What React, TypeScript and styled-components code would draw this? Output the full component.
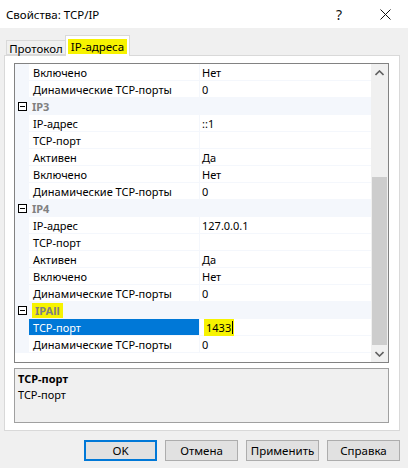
import React from 'react';
import styled, { createGlobalStyle } from 'styled-components';

const GlobalStyle = createGlobalStyle`
  html, body {
    margin: 0;
    padding: 0;
    background: #f0f0f0;
  }
  body {
    font-family: 'Segoe UI', 'Noto Sans', 'Liberation Sans', sans-serif;
    font-size: 11px;
    color: #000;
  }
`;

type Row =
  | { kind: 'category'; label: string; mark?: boolean }
  | { kind: 'prop'; name: string; value: string; selected?: boolean; mark?: boolean };

const rows: Row[] = [
  { kind: 'prop', name: 'Включено', value: 'Нет' },
  { kind: 'prop', name: 'Динамические TCP-порты', value: '0' },
  { kind: 'category', label: 'IP3' },
  { kind: 'prop', name: 'IP-адрес', value: '::1' },
  { kind: 'prop', name: 'TCP-порт', value: '' },
  { kind: 'prop', name: 'Активен', value: 'Да' },
  { kind: 'prop', name: 'Включено', value: 'Нет' },
  { kind: 'prop', name: 'Динамические TCP-порты', value: '0' },
  { kind: 'category', label: 'IP4' },
  { kind: 'prop', name: 'IP-адрес', value: '127.0.0.1' },
  { kind: 'prop', name: 'TCP-порт', value: '' },
  { kind: 'prop', name: 'Активен', value: 'Да' },
  { kind: 'prop', name: 'Включено', value: 'Нет' },
  { kind: 'prop', name: 'Динамические TCP-порты', value: '0' },
  { kind: 'category', label: 'IPAll', mark: true },
  { kind: 'prop', name: 'TCP-порт', value: '1433', selected: true, mark: true },
  { kind: 'prop', name: 'Динамические TCP-порты', value: '0' },
];

const Window = styled.div`
  width: 408px;
  height: 468px;
  display: flex;
  flex-direction: column;
  background: #f0f0f0;
  overflow: hidden;
`;

const TitleBar = styled.div`
  height: 28px;
  background: #fff;
  display: flex;
  align-items: center;
  padding-left: 6px;
  flex-shrink: 0;
`;

const Title = styled.div`
  flex: 1;
  font-size: 11.5px;
  color: #000;
`;

const TitleButton = styled.div`
  width: 46px;
  height: 28px;
  display: flex;
  align-items: center;
  justify-content: center;
  font-size: 14px;
  color: #111;
`;

const Body = styled.div`
  display: flex;
  flex-direction: column;
  padding: 7px 8px 0 4px;
`;

const TabStrip = styled.div`
  display: flex;
  align-items: flex-end;
  height: 20px;
  padding-left: 2px;
  position: relative;
  z-index: 1;
`;

const Tab = styled.div<{ $active?: boolean }>`
  box-sizing: border-box;
  display: flex;
  align-items: center;
  justify-content: center;
  border: 1px solid #d9d9d9;
  border-bottom: ${p => (p.$active ? 'none' : '1px solid #d9d9d9')};
  background: ${p => (p.$active ? '#fff' : '#f0f0f0')};
  height: ${p => (p.$active ? '21px' : '15px')};
  margin-bottom: ${p => (p.$active ? '-1px' : '0')};
  width: ${p => (p.$active ? '65px' : '60px')};
  margin-left: ${p => (p.$active ? '-1px' : '0')};
  padding-top: ${p => (p.$active ? '0' : '1px')};
  font-size: 11.5px;
`;

const Mark = styled.span`
  background: #f7f300;
  padding: 0 3px;
`;

const Panel = styled.div`
  box-sizing: border-box;
  height: 376px;
  border: 1px solid #d9d9d9;
  background: #fff;
  padding: 7px 10px 0 9px;
  display: flex;
  flex-direction: column;
`;

const Grid = styled.div`
  box-sizing: border-box;
  height: 300px;
  border: 1px solid #828282;
  display: flex;
  background: #fff;
`;

const RowList = styled.div`
  flex: 1;
  display: flex;
  flex-direction: column;
`;

const GridRow = styled.div<{ $category?: boolean }>`
  box-sizing: border-box;
  height: 17px;
  display: flex;
  border-bottom: 1px solid #f4f7fc;
  background: ${p => (p.$category ? '#f4f7fc' : '#fff')};
  flex-shrink: 0;
`;

const Margin = styled.div`
  width: 14px;
  background: #f4f7fc;
  display: flex;
  align-items: center;
  justify-content: center;
  flex-shrink: 0;
`;

const NameCell = styled.div<{ $selected?: boolean }>`
  width: 171px;
  padding-left: 4px;
  box-sizing: border-box;
  display: flex;
  align-items: center;
  white-space: nowrap;
  overflow: hidden;
  background: ${p => (p.$selected ? '#0078d7' : 'transparent')};
  color: ${p => (p.$selected ? '#fff' : '#000')};
  border-right: 1px solid #f4f7fc;
  flex-shrink: 0;
`;

const ValueCell = styled.div`
  flex: 1;
  padding-left: 2px;
  display: flex;
  align-items: center;
  white-space: nowrap;
`;

const CategoryLabel = styled.div`
  padding-left: 3px;
  display: flex;
  align-items: center;
  font-weight: bold;
  color: #808080;
`;

const Caret = styled.span`
  display: inline-block;
  width: 1px;
  height: 13px;
  background: #000;
  margin-left: 1px;
`;

const ValueMark = styled.span`
  background: #f7f300;
  padding: 1px 1px 1px 2px;
  margin-left: 2px;
  display: inline-flex;
  align-items: center;
`;

const Scrollbar = styled.div`
  width: 17px;
  background: #f0f0f0;
  display: flex;
  flex-direction: column;
  flex-shrink: 0;
`;

const ArrowButton = styled.div`
  height: 17px;
  display: flex;
  align-items: center;
  justify-content: center;
  flex-shrink: 0;
`;

const Track = styled.div`
  flex: 1;
  display: flex;
  flex-direction: column;
  padding: 0 1px;
`;

const Thumb = styled.div`
  margin-top: auto;
  height: 168px;
  background: #cdcdcd;
`;

const InfoBox = styled.div`
  box-sizing: border-box;
  margin-top: 5px;
  height: 55px;
  border: 1px solid #a0a0a0;
  background: #f0f0f0;
  padding: 2px 3px;
  line-height: 16px;
`;

const InfoTitle = styled.div`
  font-weight: bold;
`;

const ButtonRow = styled.div`
  display: flex;
  justify-content: flex-end;
  gap: 8px;
  margin-top: 9px;
`;

const Button = styled.div<{ $default?: boolean }>`
  box-sizing: border-box;
  width: 73px;
  height: 21px;
  display: flex;
  align-items: center;
  justify-content: center;
  background: #e1e1e1;
  border: ${p => (p.$default ? '2px solid #0078d7' : '1px solid #adadad')};
  font-size: 11.5px;
`;

const MinusBox = () => (
  <svg width="9" height="9" viewBox="0 0 9 9">
    <rect x="0.5" y="0.5" width="8" height="8" fill="#fff" stroke="#000" />
    <line x1="2" y1="4.5" x2="7" y2="4.5" stroke="#000" />
  </svg>
);

const Chevron = ({ up }: { up?: boolean }) => (
  <svg width="9" height="6" viewBox="0 0 9 6">
    <path
      d={up ? 'M0.5 5 L4.5 1 L8.5 5' : 'M0.5 1 L4.5 5 L8.5 1'}
      fill="none"
      stroke="#606060"
      strokeWidth="1.6"
    />
  </svg>
);

const CloseIcon = () => (
  <svg width="11" height="11" viewBox="0 0 11 11">
    <path d="M0.5 0.5 L10.5 10.5 M10.5 0.5 L0.5 10.5" stroke="#111" strokeWidth="1" />
  </svg>
);

export default function App() {
  return (
    <>
      <GlobalStyle />
      <Window>
        <TitleBar>
          <Title>Свойства: TCP/IP</Title>
          <TitleButton>?</TitleButton>
          <TitleButton>
            <CloseIcon />
          </TitleButton>
        </TitleBar>
        <Body>
          <TabStrip>
            <Tab>Протокол</Tab>
            <Tab $active>
              <Mark>IP-адреса</Mark>
            </Tab>
          </TabStrip>
          <Panel>
            <Grid>
              <RowList>
                {rows.map((r, i) =>
                  r.kind === 'category' ? (
                    <GridRow key={i} $category>
                      <Margin>
                        <MinusBox />
                      </Margin>
                      <CategoryLabel>
                        {r.mark ? <Mark>{r.label}</Mark> : r.label}
                      </CategoryLabel>
                    </GridRow>
                  ) : (
                    <GridRow key={i}>
                      <Margin />
                      <NameCell $selected={r.selected}>{r.name}</NameCell>
                      <ValueCell>
                        {r.mark ? (
                          <ValueMark>
                            {r.value}
                            <Caret />
                          </ValueMark>
                        ) : (
                          r.value
                        )}
                      </ValueCell>
                    </GridRow>
                  )
                )}
              </RowList>
              <Scrollbar>
                <ArrowButton>
                  <Chevron up />
                </ArrowButton>
                <Track>
                  <Thumb />
                </Track>
                <ArrowButton>
                  <Chevron />
                </ArrowButton>
              </Scrollbar>
            </Grid>
            <InfoBox>
              <InfoTitle>TCP-порт</InfoTitle>
              <div>TCP-порт</div>
            </InfoBox>
          </Panel>
          <ButtonRow>
            <Button $default>OK</Button>
            <Button>Отмена</Button>
            <Button>Применить</Button>
            <Button>Справка</Button>
          </ButtonRow>
        </Body>
      </Window>
    </>
  );
}
